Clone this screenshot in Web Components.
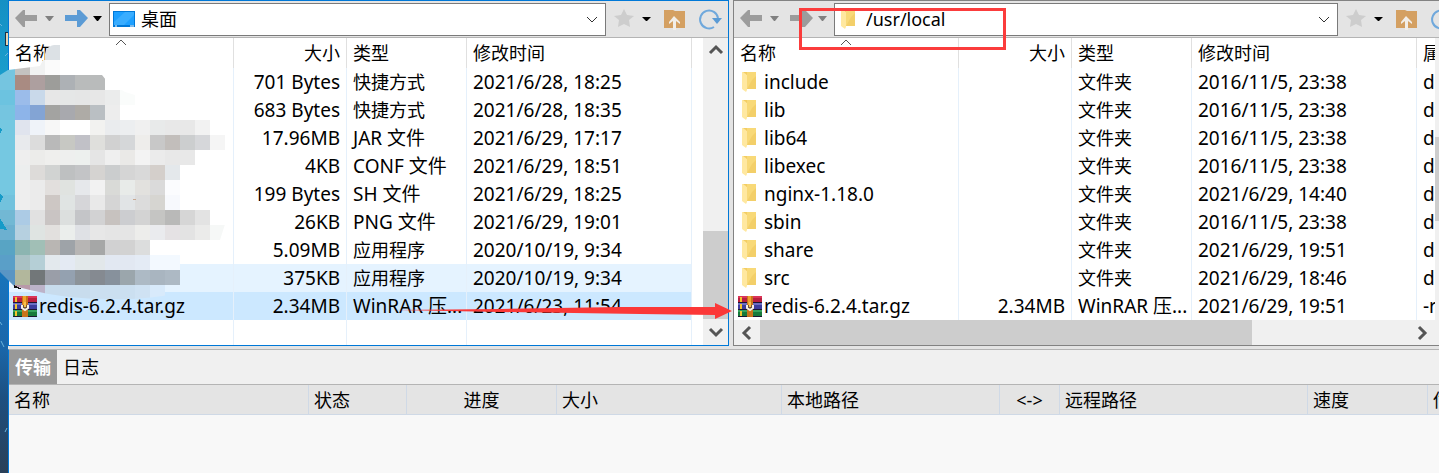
<!DOCTYPE html>
<html lang="zh-CN">
<head>
<meta charset="utf-8">
<title>文件传输</title>
<style>
  body {
    margin: 0;
    min-height: 100vh;
    display: flex;
    overflow: hidden;
    background: #e4e4e4;
    color: #000;
    font: 18px/28px "Noto Sans", "Noto Sans CJK SC", sans-serif;
  }
</style>
</head>
<body>
<transfer-app></transfer-app>

<script>
const folderIcon = `
  <svg width="24" height="24" viewBox="0 0 24 24">
    <path d="M8 2H18V19H8Z" fill="#f8d978"/>
    <path d="M14 10L18 6V19H9Z" fill="#f3cf69"/>
    <path d="M4 2H6L9 5V20L8 22L4 19Z" fill="#ffe8a0"/>
    <path d="M5 2H9V5Z" fill="#f3cd62"/>
  </svg>`;

const rarIcon = `
  <svg width="24" height="24" viewBox="0 0 24 24">
    <path d="M0 2H24V9H0Z" fill="#b91f3f"/><path d="M0 2H24V4H0Z" fill="#db3558"/>
    <path d="M0 9H24V16H0Z" fill="#3c3d9e"/><path d="M0 9H24V11H0Z" fill="#6b6fc4"/>
    <path d="M0 16H24V23H0Z" fill="#177a3b"/><path d="M0 16H24V18H0Z" fill="#35a35c"/>
    <path d="M0 8H24V9H0ZM0 15H24V16H0ZM0 22H24V23H0Z" fill="#1c1630"/>
    <path d="M2 3H4V8H2ZM2 10H4V15H2ZM2 17H4V22H2Z" fill="#f3c52d"/>
    <path d="M9 2H15V23H9Z" fill="#c9741b"/><path d="M10 2H13V11H10Z" fill="#f0a32f"/>
    <path d="M9 11H15V16H9Z" fill="#70543a"/>
    <path d="M9 11V14L12 16L15 14V11" fill="none" stroke="#f4f0e6" stroke-width="2"/>
    <path d="M12 8V13" stroke="#f8c14a" stroke-width="2"/>
  </svg>`;

const chevrons = {
  up: 'M3 11L9 5L15 11',
  down: 'M3 6L9 12L15 6',
  left: 'M12 3L6 9L12 15',
  right: 'M6 3L12 9L6 15'
};

class TransferApp extends HTMLElement {
  constructor() {
    super();
    this.attachShadow({ mode: 'open' }).innerHTML = `
      <style>
        :host {
          display: grid;
          grid-template-columns: 8px minmax(0, 1fr);
          flex: 1;
          position: relative;
        }
        /* the window runs a little past the right edge of the screen */
        main {
          display: flex;
          flex-direction: column;
          margin-right: -22px;
        }
        .panes {
          display: grid;
          grid-template-columns: minmax(0, 721fr) minmax(0, 728fr);
          gap: 4px;
          margin-bottom: 3px;
        }
        transfer-queue { flex: 1; }
      </style>
      <desktop-strip></desktop-strip>
      <main>
        <div class="panes">
          <file-pane side="local"></file-pane>
          <file-pane side="remote"></file-pane>
        </div>
        <transfer-queue></transfer-queue>
      </main>
      <mosaic-patch></mosaic-patch>
      <red-marks></red-marks>`;
  }
}

class DesktopStrip extends HTMLElement {
  constructor() {
    super();
    this.attachShadow({ mode: 'open' }).innerHTML = `
      <style>
        :host {
          display: block;
          background: linear-gradient(#1690c4, #1a9ccb 15%, #1583bf 45%, #1970b8 62%, #1a66a8 74%, #1d4f80 84%, #2a4058);
        }
        svg { display: block; }
      </style>
      <svg width="8" height="473" viewBox="0 0 8 473">
        <path d="M5 32H8V46H5Z" fill="#16324a"/>
        <path d="M6 33H8V45H6Z" fill="#e6d3b0"/>
        <path d="M0 24L2 26M5 56L8 53M1 341L4 347M0 322L2 325M5 432L7 428" stroke="#6bb4dc"/>
      </svg>`;
  }
}

class ToolBar extends HTMLElement {
  connectedCallback() {
    const remote = this.getAttribute('side') === 'remote';
    const forward = remote ? '#9c9c9c' : '#5b9bd5';
    const place = remote
      ? folderIcon
      : `<svg width="24" height="24" viewBox="0 0 24 24"><path d="M1 4H23V20H1Z" fill="#0078d7"/><path d="M2 5H22V18H2Z" fill="#1ea0ff"/><path d="M13 5H22V8L12 18H2V15Z" fill="#39adff"/><path d="M3 19H5M18 19H22" stroke="#fff"/></svg>`;
    this.attachShadow({ mode: 'open' }).innerHTML = `
      <style>
        :host {
          display: flex;
          align-items: center;
          height: 34px;
          padding: 1px 6px 1px 5px;
          border-bottom: 1px solid #b4b4b4;
          background: #e4e4e4;
        }
        button {
          display: flex;
          padding: 0;
          border: 0;
          background: none;
        }
        .path {
          flex: 1;
          display: flex;
          align-items: center;
          min-width: 0;
          height: 31px;
          margin: 0 8px 0 3px;
          padding: 0 4px 0 2px;
          border: 1px solid #7a7a7a;
          background: #fff;
        }
        input {
          flex: 1;
          min-width: 0;
          margin: 0 5px;
          padding: 0;
          border: 0;
          outline: 0;
          background: none;
          color: inherit;
          font: inherit;
        }
        .up { margin-left: 4px; }
        .refresh { margin-left: 12px; }
      </style>
      <button aria-label="后退"><svg width="24" height="24" viewBox="0 0 24 24"><path d="M1 11L9 3H11V8H23V14H11V20H9Z" fill="#9c9c9c"/></svg></button>
      <button aria-label="后退历史"><svg width="26" height="24" viewBox="0 0 26 24"><path d="M7 9H16L12 14H11Z" fill="#808080"/></svg></button>
      <button aria-label="前进"><svg width="24" height="24" viewBox="0 0 24 24"><path d="M24 11L16 3H13V8H1V14H13V20H16Z" fill="${forward}"/></svg></button>
      <button aria-label="前进历史"><svg width="18" height="24" viewBox="0 0 18 24"><path d="M5 9H14L10 14H9Z" fill="${remote ? '#808080' : '#000'}"/></svg></button>
      <div class="path">
        ${place}
        <input aria-label="路径" value="${remote ? '/usr/local' : '桌面'}">
        <button aria-label="展开"><svg width="18" height="18" viewBox="0 0 18 18"><path d="M4 7L9 12L14 7" fill="none" stroke="#333"/></svg></button>
      </div>
      <button aria-label="收藏"><svg width="20" height="22" viewBox="0 0 20 22"><path d="M10 1L13 7L20 8L15 12L16 19L10 16L4 19L5 12L0 8L7 7Z" fill="#cdcdcd"/></svg></button>
      <button aria-label="收藏列表"><svg width="24" height="24" viewBox="0 0 24 24"><path d="M8 10H17L13 14H12Z"/></svg></button>
      <button class="up" aria-label="上级目录"><svg width="24" height="24" viewBox="0 0 24 24"><path d="M2 3H11L13 4H23V21H2Z" fill="#d4a062"/><path d="M12 9L18 15V17L14 14V23H11V14L7 17V15Z" fill="#f2eee8"/></svg></button>
      <button class="refresh" aria-label="刷新"><svg width="24" height="24" viewBox="0 0 24 24"><path d="M16 20A9 9 0 1 1 20 11" fill="none" stroke="#6fa8dc" stroke-width="2"/><path d="M14 11H24L19 17Z" fill="#5b9bd5"/></svg></button>`;
  }
}

class ScrollBar extends HTMLElement {
  connectedCallback() {
    const vertical = this.hasAttribute('vertical');
    const [before, thumb, after] = this.getAttribute('parts').split(' ');
    const arrow = dir => `<svg width="18" height="18" viewBox="0 0 18 18"><path d="${chevrons[dir]}" fill="none" stroke="#555" stroke-width="3"/></svg>`;
    this.attachShadow({ mode: 'open' }).innerHTML = `
      <style>
        :host {
          display: flex;
          flex-direction: ${vertical ? 'column' : 'row'};
          background: #f0f0f0;
        }
        button {
          display: grid;
          place-content: center;
          ${vertical ? 'height' : 'width'}: 26px;
          padding: 0;
          border: 0;
          background: none;
        }
        .thumb { flex: ${thumb}; background: #cdcdcd; }
      </style>
      <button aria-label="向前滚动">${arrow(vertical ? 'up' : 'left')}</button>
      <div style="flex: ${before}"></div>
      <div class="thumb"></div>
      <div style="flex: ${after}"></div>
      <button aria-label="向后滚动">${arrow(vertical ? 'down' : 'right')}</button>`;
  }
}

const localFiles = [
  ['', '701 Bytes', '快捷方式', '2021/6/28, 18:25'],
  ['', '683 Bytes', '快捷方式', '2021/6/28, 18:35'],
  ['', '17.96MB', 'JAR 文件', '2021/6/29, 17:17'],
  ['', '4KB', 'CONF 文件', '2021/6/29, 18:51'],
  ['', '199 Bytes', 'SH 文件', '2021/6/29, 18:25'],
  ['', '26KB', 'PNG 文件', '2021/6/29, 19:01'],
  ['', '5.09MB', '应用程序', '2020/10/19, 9:34'],
  ['', '375KB', '应用程序', '2020/10/19, 9:34'],
  ['redis-6.2.4.tar.gz', '2.34MB', 'WinRAR 压...', '2021/6/23, 11:54']
];

const remoteFiles = [
  ['include', '', '文件夹', '2016/11/5, 23:38', 'd'],
  ['lib', '', '文件夹', '2016/11/5, 23:38', 'd'],
  ['lib64', '', '文件夹', '2016/11/5, 23:38', 'd'],
  ['libexec', '', '文件夹', '2016/11/5, 23:38', 'd'],
  ['nginx-1.18.0', '', '文件夹', '2021/6/29, 14:40', 'd'],
  ['sbin', '', '文件夹', '2016/11/5, 23:38', 'd'],
  ['share', '', '文件夹', '2021/6/29, 19:51', 'd'],
  ['src', '', '文件夹', '2021/6/29, 18:46', 'd'],
  ['redis-6.2.4.tar.gz', '2.34MB', 'WinRAR 压...', '2021/6/29, 19:51', '-r']
];

class FilePane extends HTMLElement {
  connectedCallback() {
    const side = this.getAttribute('side');
    const remote = side === 'remote';
    const files = remote ? remoteFiles : localFiles;
    const heads = ['名称', '大小', '类型', '修改时间', remote ? '属' : ''];
    const icon = name => !name ? '' : name.endsWith('.gz') ? rarIcon : folderIcon;
    const cell = text => `<td class="${/[a-z0-9]/i.test(text) ? 'latin' : ''}">${text}</td>`;

    const rows = files.map((f, i) => {
      const state = remote ? '' : i === 8 ? 'selected' : i === 7 ? 'hover' : '';
      return `<tr class="${state}">
        <td class="latin"><div class="name">${icon(f[0])}<span>${f[0]}</span></div></td>
        ${cell(f[1])}${cell(f[2])}${cell(f[3])}${cell(f[4] || '')}
      </tr>`;
    }).join('');

    this.attachShadow({ mode: 'open' }).innerHTML = `
      <style>
        :host {
          display: block;
          border: 1px solid ${remote ? '#828282' : '#0078d7'};
          background: #fff;
        }
        .body {
          display: grid;
          grid-template-columns: minmax(0, 1fr) 25px;
          height: 307px;
        }
        .list {
          display: flex;
          flex-direction: column;
          min-width: 0;
          overflow: hidden;
        }
        table {
          width: 100%;
          border-collapse: separate;
          border-spacing: 0;
          table-layout: fixed;
        }
        th, td {
          box-sizing: border-box;
          height: 28px;
          padding: 0 6px;
          border-right: 1px solid #e5f0fb;
          overflow: hidden;
          text-align: left;
          font-weight: normal;
          white-space: nowrap;
        }
        th { height: 30px; border-color: #e0e0e0; position: relative; }
        th:last-child, td:last-child { border-right: 0; }
        th:nth-child(2), td:nth-child(2) { text-align: right; }
        td:first-child { padding: 0 4px; }
        .latin { font-size: 19px; }
        .name { display: flex; align-items: center; gap: 2px; height: 28px; }
        .hover td:not(:last-child) { background: #e5f3ff; }
        .selected td:not(:last-child) { background: #cce8ff; }
        .sort { position: absolute; top: 0; left: 50%; margin-left: -6px; }
        .spacer td { height: 25px; }
        .across { height: 25px; }
      </style>
      <tool-bar side="${side}"></tool-bar>
      <div class="body">
        <div class="list">
          <table>
            <colgroup><col style="width: 225px"><col style="width: 113px"><col style="width: 120px"><col style="width: 225px"><col></colgroup>
            <thead><tr>${heads.map((h, i) => `<th>${h}${i ? '' : '<svg class="sort" width="12" height="8" viewBox="0 0 12 8"><path d="M1 7L6 2L11 7" fill="none" stroke="#555"/></svg>'}</th>`).join('')}</tr></thead>
            <tbody>${rows}${remote ? '' : '<tr class="spacer"><td></td><td></td><td></td><td></td><td></td></tr>'}</tbody>
          </table>
          ${remote ? '<scroll-bar class="across" parts="0 490 157"></scroll-bar>' : ''}
        </div>
        <scroll-bar vertical parts="${remote ? '70 80 94' : '167 88 0'}"></scroll-bar>
      </div>`;
  }
}

class TransferQueue extends HTMLElement {
  constructor() {
    super();
    this.attachShadow({ mode: 'open' }).innerHTML = `
      <style>
        :host {
          display: block;
          border-top: 1px solid #b4b4b4;
          border-left: 1px solid #0078d7;
          background: #f8f8f8;
        }
        nav {
          display: flex;
          height: 34px;
          border-bottom: 1px solid #b4b4b4;
          background: #f0f0f0;
        }
        nav button {
          padding: 0 6px;
          border: 0;
          background: none;
          color: inherit;
          font: inherit;
        }
        nav .active { background: #999; color: #fff; font-weight: bold; }
        table { width: 100%; border-collapse: separate; border-spacing: 0; table-layout: fixed; background: #e4e4e4; }
        th {
          box-sizing: border-box;
          height: 30px;
          padding: 0 5px;
          border-right: 1px solid #cfd9e6;
          border-bottom: 1px solid #cfd9e6;
          overflow: hidden;
          text-align: left;
          font-weight: normal;
          white-space: nowrap;
        }
        .center { text-align: center; }
      </style>
      <nav><button class="active">传输</button><button>日志</button></nav>
      <table>
        <colgroup><col style="width: 300px"><col style="width: 98px"><col style="width: 150px"><col style="width: 225px"><col style="width: 218px"><col style="width: 60px"><col style="width: 248px"><col style="width: 120px"><col></colgroup>
        <thead><tr><th>名称</th><th>状态</th><th class="center">进度</th><th>大小</th><th>本地路径</th><th class="center">&lt;-&gt;</th><th>远程路径</th><th>速度</th><th>估</th></tr></thead>
      </table>`;
  }
}

// One string per 15px row of the blurred-out names, starting at x = 15
const mosaic = [
  [45, '- - dce1e5'],
  [60, 'c4c2c0 f1f2f2 fbfbfb'],
  [75, 'a98b82 ad9f9f 9d9d9a adb1b5 b9bbbb b9bbbb'],
  [90, '9bbcea c9d9ea e7e7e7 e5e7e7 e5e6e6 e7e7e7 ebecec fafcfb'],
  [105, '8db4e9 83a4d4 a3a3a1 a8a9ae aeaba6 babfc3 ededed'],
  [120, 'e0e4ee eff3f9 f7f7f7 ffffff ffffff f2f2f0 eaecee eceef0 f0f0f0 e8eaea e8e8e8 e8e8e8 f2f2f2'],
  [135, 'e8eaed dcdcdc b9b9b9 c7c8c3 c1c1c7 dfdfdc d1d1d1 d5d7d9 eeedeb c8c8c8 c2bebb cccecf d6d7da f5f5f5'],
  [150, 'eeeeee ececea efefed eeefee edf0ee e5e5e5 efefef eae9e7 f3f3f3 ebebeb e8e8e8 e8e8e8'],
  [165, 'eceeee dddbd9 d1d3d2 bec0c1 c3c4c6 d5d3d1 cbcdce d5d5d5 d9d9d9 d4cfcb e4e8eb'],
  [180, 'eeeeee ebebeb e2dfdd e0e3e0 e6e8eb f2f2f2 d9dad7 e8ebe9 e2e1de dadada fbfcfe'],
  [195, 'eeeeee ebebeb cdc7c4 e0e4e3 d6d6d9 e9e9e9 d5d5d5 e1e4e6 dcdcdc d6d5d1 f7f9fd'],
  [210, 'accbe5 e1e1e1 c9c4c3 dcdfde c4c5c8 d2d2d3 c7c2bf cccdd0 d3d3d3 c5c5c3 b9b9b8 d6d6d6 e3e3e3'],
  [225, 'b6d0e0 dfe4e2 e2e0de ebeeec dfe1e5 e7e7e7 e5e5e5 e5e5e5 ededeb eaebee e5e2e4 e3e3e3 ebebea f6f8f7'],
  [240, '8cb5b1 a1bfb6 b9b6b3 9ea3a8 b7b5b4 a6a7a7 d1d1d2 d2d2d2 dcdddd'],
  [255, 'a9c2c5 b5cfd6 e3e9ed e4eaf3 e2e8ea e2e7ea e2e8f2 e2e8f2 e4ebf5 f3f9ff f3f9ff'],
  [270, 'b2b79c 727779 9a9ea8 94a1b0 8c9399 858a91 87919c 9ba6ac adbac5 a9b5c0 adb9c4'],
  [285, 'b899a9 bcb3c9 c8dced c8dced c8dced cbdff0 cbdff0 cbdff0 cfe2f3 d8eafb']
];
const edge = ['75c5e0', '75c5e0', '6cc3e0', '75c5e0', '75c8e1', '75c8e1', '75c8e1', '75c8e1', '75c8e1', '72c2dd', '72b8d4', '6cb0d0', '58a4c4', '5a9fc8', '5a95c4', '5a95c4'];

class MosaicPatch extends HTMLElement {
  constructor() {
    super();
    const cells = mosaic.map(([y, row]) => row.split(' ').map((c, i) =>
      c === '-' ? '' : `<rect x="${15 + i * 15}" y="${y}" width="15" height="15" fill="#${c}"/>`).join('')).join('');
    const side = edge.map((c, i) => `<rect y="${60 + i * 15}" width="15" height="15" fill="#${c}"/>`).join('');
    this.attachShadow({ mode: 'open' }).innerHTML = `
      <style>
        :host { position: absolute; top: 0; left: 0; pointer-events: none; }
        svg { display: block; }
      </style>
      <svg width="233" height="304" viewBox="0 0 233 304" shape-rendering="crispEdges">
        <clipPath id="brush"><path d="M0 75L8 70L40 66L44 58L46 50Q50 43 66 44V75H102L106 80L125 92L227 122V218L220 240L205 256L190 266V287L176 293Q150 300 110 299Q65 299 30 290L14 286L0 272Z"/></clipPath>
        <g clip-path="url(#brush)">${side}${cells}</g>
        <path d="M0 127L2 130L0 134ZM0 193L3 197L0 203ZM0 218L7 230L0 229Z" fill="#169bc8"/>
        <path d="M14 285L22 289L14 288Z" fill="#111"/>
        <path d="M133 199H136" stroke="#c8a890"/>
      </svg>`;
  }
}

class RedMarks extends HTMLElement {
  constructor() {
    super();
    this.attachShadow({ mode: 'open' }).innerHTML = `
      <style>
        :host { position: absolute; top: 0; left: 0; pointer-events: none; }
        svg { display: block; }
      </style>
      <svg width="1010" height="330" viewBox="0 0 1010 330">
        <path d="M799 8H1006V50H799ZM802 11V47H1003V11Z" fill="#fb3c3c" fill-rule="evenodd"/>
        <path d="M396 310L500 309L620 307H715V303L732 311L715 319V315L640 314L500 312Z" fill="#fb3838"/>
      </svg>`;
  }
}

customElements.define('desktop-strip', DesktopStrip);
customElements.define('tool-bar', ToolBar);
customElements.define('scroll-bar', ScrollBar);
customElements.define('file-pane', FilePane);
customElements.define('transfer-queue', TransferQueue);
customElements.define('mosaic-patch', MosaicPatch);
customElements.define('red-marks', RedMarks);
customElements.define('transfer-app', TransferApp);
</script>
</body>
</html>
